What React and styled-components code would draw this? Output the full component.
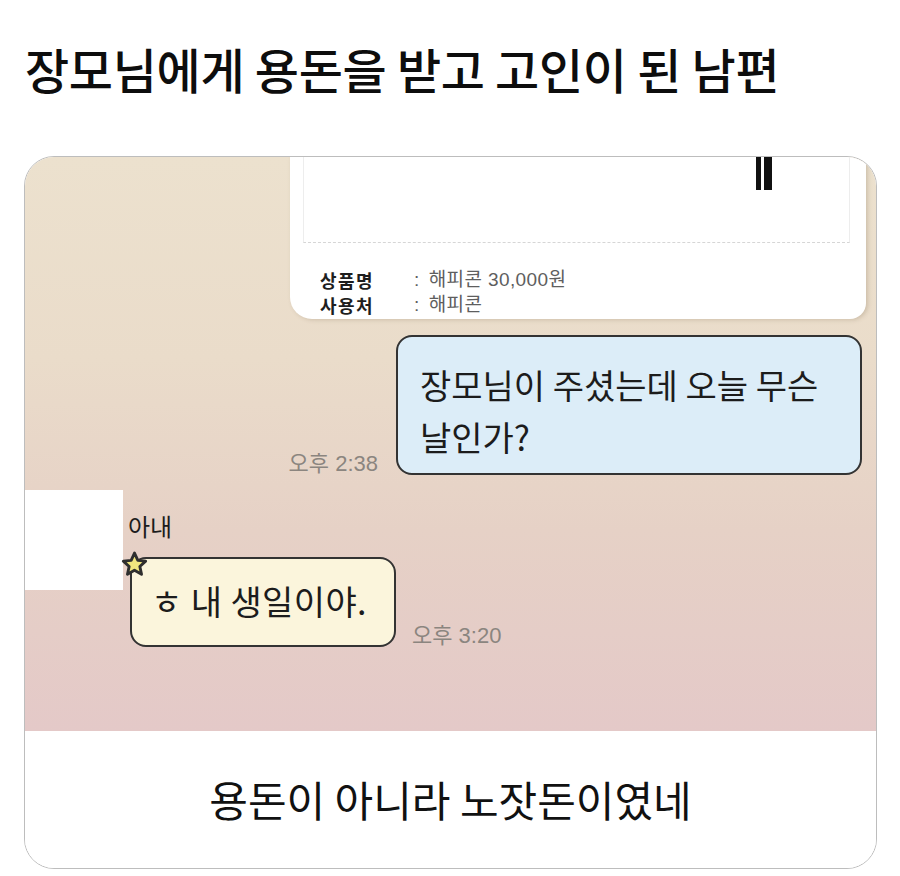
import React from 'react'
import styled, { createGlobalStyle } from 'styled-components'

const GlobalStyle = createGlobalStyle`
  html, body {
    margin: 0;
    padding: 0;
    background: #ffffff;
  }
  body {
    font-family: "Noto Sans CJK KR", "Noto Sans", sans-serif;
    color: #111;
  }
`

const latinFirst = `"Liberation Sans", "Noto Sans CJK KR", sans-serif`

const Page = styled.div`
  width: 900px;
  height: 876px;
  box-sizing: border-box;
  padding: 38px 23px 0 24px;
  overflow: hidden;
`

const Title = styled.h1`
  margin: 0 0 58px 1px;
  font-size: 48px;
  line-height: 60px;
  font-weight: 500;
  letter-spacing: -0.3px;
  color: #0d0d0d;
`

const Card = styled.div`
  width: 853px;
  height: 713px;
  box-sizing: border-box;
  border: 1px solid #bdbdbd;
  border-radius: 30px;
  overflow: hidden;
  display: grid;
  grid-template-rows: 574px 1fr;
`

const ChatShot = styled.div`
  display: flex;
  flex-direction: column;
  background: linear-gradient(
    180deg,
    #ece1ce 0%,
    #eadcca 35%,
    #e6d1c6 65%,
    #e4c9c8 100%
  );
`

const GiftBox = styled.div`
  align-self: flex-end;
  width: 576px;
  height: 162px;
  margin-right: 10px;
  box-sizing: border-box;
  background: #fff;
  border-radius: 0 0 16px 22px;
  box-shadow: 2px 1px 4px rgba(120, 100, 70, 0.25);
`

const Photo = styled.div`
  height: 85px;
  margin: 0 16px 0 13px;
  border-left: 1px solid #ededed;
  border-right: 1px solid #ededed;
  border-bottom: 1px dashed #d6d6d6;
  display: flex;
  justify-content: flex-end;
  align-items: flex-start;
  gap: 3px;
  padding-right: 77px;
`

const Bar = styled.span`
  display: block;
  width: ${p => p.$w}px;
  height: 33px;
  background: #111;
`

const InfoList = styled.div`
  margin-top: 24px;
  padding-left: 30px;
  display: flex;
  flex-direction: column;
`

const InfoRow = styled.div`
  display: flex;
  align-items: center;
  height: 25px;
  font-size: 18px;
  line-height: 20px;
`

const InfoLabel = styled.span`
  width: 94px;
  font-weight: 700;
  letter-spacing: 1.5px;
  color: #1e1e1e;
`

const InfoValue = styled.span`
  font-family: ${latinFirst};
  font-size: 19px;
  color: #5e5e5e;
  letter-spacing: 0.4px;
`

const Colon = styled.span`
  margin-right: 9px;
`

const MyRow = styled.div`
  display: flex;
  justify-content: flex-end;
  align-items: flex-end;
  gap: 18px;
  margin-top: 16px;
  padding-right: 14px;
`

const Time = styled.span`
  font-family: ${latinFirst};
  font-size: 22px;
  line-height: 22px;
  color: #8b857f;
  white-space: nowrap;
`

const Bubble = styled.div`
  position: relative;
  box-sizing: border-box;
  border: 2px solid #333;
  border-radius: 16px;
  color: #1c1c1c;
  font-size: 34px;
  background: ${p => (p.$tone === 'blue' ? '#dcedf8' : '#fbf5dc')};
`

const MyBubble = styled(Bubble)`
  width: 466px;
  padding: 22px 12px 10px 22px;
  line-height: 52px;
`

const OtherRow = styled.div`
  display: flex;
  margin-top: 15px;
`

const Avatar = styled.div`
  width: 98px;
  height: 100px;
  background: #fff;
`

const OtherColumn = styled.div`
  display: flex;
  flex-direction: column;
  padding-top: 22px;
`

const Name = styled.span`
  margin-left: 5px;
  font-size: 24px;
  line-height: 28px;
  color: #1c1c1c;
`

const OtherLine = styled.div`
  display: flex;
  align-items: flex-end;
  margin-top: 17px;
  margin-left: 7px;
  gap: 16px;
`

const OtherBubble = styled(Bubble)`
  width: 266px;
  height: 90px;
  display: flex;
  align-items: center;
  padding: 0 0 2px 19px;
  line-height: 40px;
  letter-spacing: 0.4px;
`

const StarBadge = styled.svg`
  position: absolute;
  top: -9px;
  left: -12px;
`

const Caption = styled.div`
  display: flex;
  align-items: center;
  justify-content: center;
  background: #fff;
  font-size: 42px;
  font-weight: 400;
  color: #111;
  padding-bottom: 2px;
`

function Star() {
  return (
    <StarBadge width="29" height="29" viewBox="0 0 26 26">
      <path
        d="M13 2.8 L16 9.3 L23 10 L17.8 14.8 L19.3 21.8 L13 18.2 L6.7 21.8 L8.2 14.8 L3 10 L10 9.3 Z"
        fill="#f1e77e"
        stroke="#2e2e2e"
        strokeWidth="2.6"
        strokeLinejoin="round"
      />
    </StarBadge>
  )
}

export default function App() {
  return (
    <>
      <GlobalStyle />
      <Page>
        <Title>장모님에게 용돈을 받고 고인이 된 남편</Title>
        <Card>
          <ChatShot>
            <GiftBox>
              <Photo>
                <Bar $w={5} />
                <Bar $w={8} />
              </Photo>
              <InfoList>
                <InfoRow>
                  <InfoLabel>상품명</InfoLabel>
                  <InfoValue><Colon>:</Colon>해피콘 30,000원</InfoValue>
                </InfoRow>
                <InfoRow>
                  <InfoLabel>사용처</InfoLabel>
                  <InfoValue><Colon>:</Colon>해피콘</InfoValue>
                </InfoRow>
              </InfoList>
            </GiftBox>

            <MyRow>
              <Time>오후 2:38</Time>
              <MyBubble $tone="blue">
                장모님이 주셨는데 오늘 무슨
                <br />
                날인가?
              </MyBubble>
            </MyRow>

            <OtherRow>
              <Avatar />
              <OtherColumn>
                <Name>아내</Name>
                <OtherLine>
                  <OtherBubble $tone="yellow">
                    <Star />
                    ㅎ 내 생일이야.
                  </OtherBubble>
                  <Time>오후 3:20</Time>
                </OtherLine>
              </OtherColumn>
            </OtherRow>
          </ChatShot>
          <Caption>용돈이 아니라 노잣돈이였네</Caption>
        </Card>
      </Page>
    </>
  )
}
